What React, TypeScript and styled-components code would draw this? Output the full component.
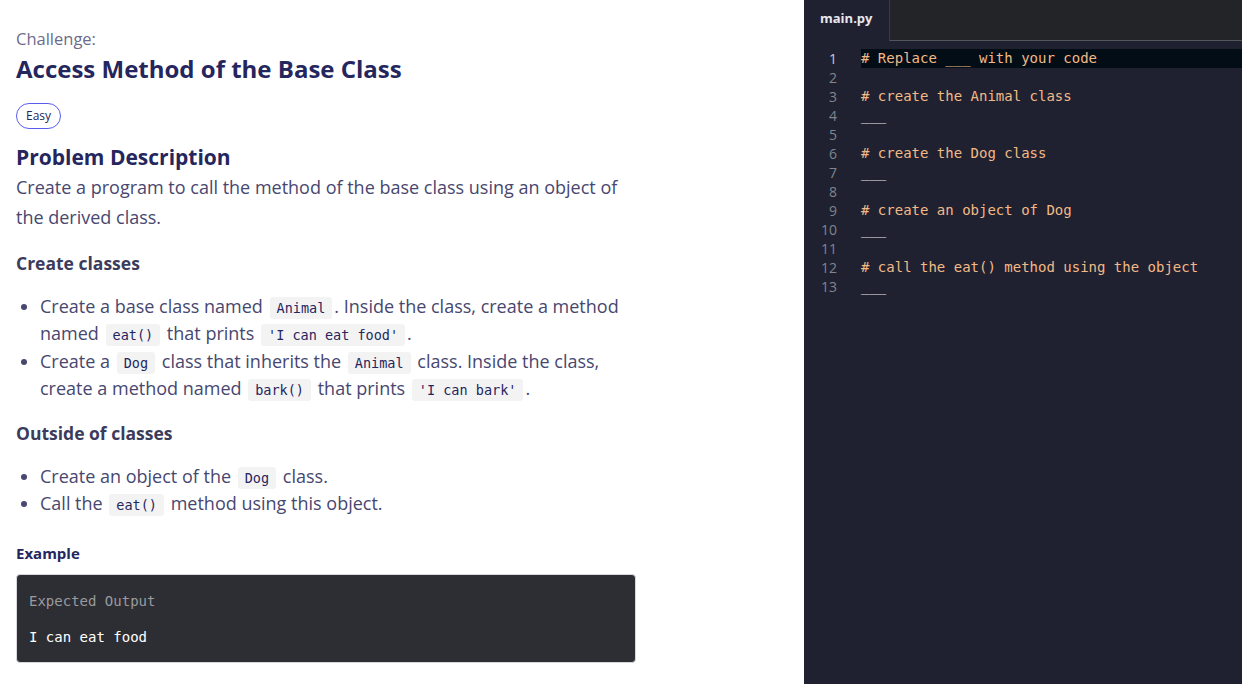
import React from "react";
import styled, { createGlobalStyle } from "styled-components";

const GlobalStyle = createGlobalStyle`
  html, body {
    margin: 0;
    padding: 0;
    background: #ffffff;
  }
  * {
    box-sizing: border-box;
  }
`;

const codeLines: string[] = [
  "# Replace ___ with your code",
  "",
  "# create the Animal class",
  "___",
  "",
  "# create the Dog class",
  "___",
  "",
  "# create an object of Dog",
  "___",
  "",
  "# call the eat() method using the object",
  "___",
];

export default function App(): JSX.Element {
  return (
    <>
      <GlobalStyle />
      <Page>
        <Left>
          <Content>
            <Kicker>Challenge:</Kicker>
            <Title>Access Method of the Base Class</Title>
            <Badge>Easy</Badge>
            <SectionTitle>Problem Description</SectionTitle>
            <Paragraph>
              Create a program to call the method of the base class using an
              object of the derived class.
            </Paragraph>
            <SubTitle>Create classes</SubTitle>
            <List>
              <Item>
                Create a base class named <Code>Animal</Code>. Inside the class,
                create a method named <Code>eat()</Code> that prints{" "}
                <Code>'I can eat food'</Code>.
              </Item>
              <Item>
                Create a <Code>Dog</Code> class that inherits the{" "}
                <Code>Animal</Code> class. Inside the class, create a method
                named <Code>bark()</Code> that prints <Code>'I can bark'</Code>.
              </Item>
            </List>
            <SubTitle>Outside of classes</SubTitle>
            <List>
              <Item>
                Create an object of the <Code>Dog</Code> class.
              </Item>
              <Item>
                Call the <Code>eat()</Code> method using this object.
              </Item>
            </List>
            <ExampleTitle>Example</ExampleTitle>
            <OutputBox>
              <OutputLabel>Expected Output</OutputLabel>
              <OutputText>I can eat food</OutputText>
            </OutputBox>
          </Content>
        </Left>
        <Editor>
          <TabBar>
            <Tab>main.py</Tab>
            <TabFill />
          </TabBar>
          <Lines>
            {codeLines.map((line, i) => (
              <Line key={i}>
                <LineNo active={i === 0}>{i + 1}</LineNo>
                <LineText active={i === 0} blank={line === "___"}>
                  {line}
                </LineText>
              </Line>
            ))}
          </Lines>
        </Editor>
      </Page>
    </>
  );
}

const Page = styled.div`
  display: flex;
  width: 1242px;
  height: 684px;
  overflow: hidden;
`;
const Left = styled.div`
  width: 804px;
  flex-shrink: 0;
  background: #ffffff;
  padding: 28px 16px 0 16px;
  font-family: "Open Sans", "Liberation Sans", sans-serif;
`;
const Content = styled.div`
  width: 622px;
`;
const Kicker = styled.div`
  font-size: 16.5px;
  line-height: 22px;
  color: #6c6c8a;
`;
const Title = styled.h1`
  margin: 3px 0 0 0;
  font-size: 24px;
  line-height: 32px;
  font-weight: 700;
  color: #25265e;
`;
const Badge = styled.div`
  display: inline-block;
  margin-top: 18px;
  height: 26px;
  padding: 0 9px;
  border: 1px solid #5b5bf0;
  border-radius: 13px;
  font-size: 12px;
  line-height: 24px;
  color: #25265e;
`;
const SectionTitle = styled.h2`
  margin: 14px 0 0 0;
  font-size: 21px;
  line-height: 28px;
  font-weight: 700;
  color: #25265e;
`;
const Paragraph = styled.p`
  margin: 1px 0 0 0;
  font-size: 18px;
  line-height: 30px;
  color: #474770;
`;
const SubTitle = styled.h3`
  margin: 18px 0 0 0;
  font-size: 17.5px;
  line-height: 26px;
  font-weight: 700;
  color: #3b3b5c;
`;
const List = styled.ul`
  margin: 17px 0 0 0;
  padding-left: 24px;
`;
const Item = styled.li`
  font-size: 18px;
  line-height: 27.3px;
  color: #474770;
`;
const Code = styled.code`
  font-family: "DejaVu Sans Mono", "Liberation Mono", monospace;
  font-size: 13.5px;
  line-height: 1;
  background: #f3f3f4;
  color: #25265e;
  border-radius: 3px;
  padding: 3px 7px;
  margin: 0 2px;
`;
const ExampleTitle = styled.h4`
  margin: 24px 0 0 0;
  font-size: 15px;
  line-height: 22px;
  font-weight: 700;
  color: #25265e;
`;
const OutputBox = styled.div`
  margin-top: 10px;
  width: 620px;
  height: 89px;
  background: #2d2e33;
  border: 1px solid #d8d8dc;
  border-radius: 4px;
  padding: 16px 12px;
  font-family: "DejaVu Sans Mono", "Liberation Mono", monospace;
  font-size: 14px;
  line-height: 20px;
`;
const OutputLabel = styled.div`
  color: #9a9a9f;
`;
const OutputText = styled.div`
  margin-top: 16px;
  color: #ffffff;
`;
const Editor = styled.div`
  flex: 1;
  background: #1f2130;
  display: flex;
  flex-direction: column;
`;
const TabBar = styled.div`
  display: flex;
  height: 41px;
`;
const Tab = styled.div`
  width: 85px;
  padding-left: 16px;
  padding-top: 9px;
  font-family: "Open Sans", "Liberation Sans", sans-serif;
  font-weight: 700;
  font-size: 13px;
  color: #e8e8ee;
  background: #1f2130;
`;
const TabFill = styled.div`
  flex: 1;
  background: #232428;
  border-left: 1px solid #3a3b40;
  border-bottom: 1px solid #55565c;
`;
const Lines = styled.div`
  padding-top: 8px;
  font-family: "DejaVu Sans Mono", "Liberation Mono", monospace;
  font-size: 14px;
`;
const Line = styled.div`
  display: flex;
  height: 19px;
  line-height: 19px;
`;
const LineNo = styled.div<{ active: boolean }>`
  width: 37px;
  text-align: right;
  padding-right: 4px;
  color: ${({ active }) => (active ? "#c9ccd4" : "#80858f")};
  font-family: "Open Sans", "Liberation Sans", sans-serif;
  font-size: 14px;
`;
const LineText = styled.div<{ active: boolean; blank: boolean }>`
  flex: 1;
  margin-left: 20px;
  white-space: pre;
  background: ${({ active }) => (active ? "#030d16" : "transparent")};
  color: ${({ blank }) => (blank ? "#e8e8ee" : "#f2b987")};
`;
